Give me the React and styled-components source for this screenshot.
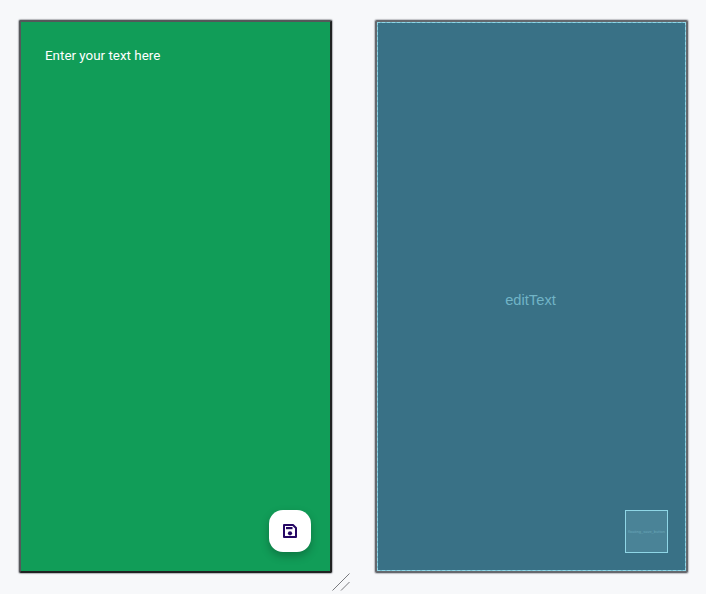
import React from "react"
import styled, { createGlobalStyle } from "styled-components"

const GlobalStyle = createGlobalStyle`
  html, body {
    margin: 0;
    padding: 0;
    height: 100%;
    background: #f7f8fa;
    overflow: hidden;
  }
`

export default function App() {
  return (
    <>
      <GlobalStyle />
      <Page>
        <DeviceColumn>
          <DesignFrame>
            <HintText>Enter your text here</HintText>
            <SaveButton>
              <SaveIcon />
            </SaveButton>
          </DesignFrame>
          <ResizeHandle />
        </DeviceColumn>
        <DeviceColumn>
          <BlueprintFrame>
            <BlueprintLabel>editText</BlueprintLabel>
            <BlueprintButton>
              <TinyLabel>floating_save_button</TinyLabel>
            </BlueprintButton>
          </BlueprintFrame>
        </DeviceColumn>
      </Page>
    </>
  )
}

function SaveIcon() {
  return (
    <svg width="14" height="14" viewBox="0 0 14 14" fill="none">
      <path
        d="M1 1H10L13 4V13H1Z"
        stroke="#260764"
        strokeWidth="2"
        strokeLinejoin="round"
      />
      <rect x="3" y="3" width="6.5" height="2.2" fill="#260764" />
      <circle cx="7" cy="9.3" r="2.1" fill="#260764" />
    </svg>
  )
}

function ResizeHandle() {
  return (
    <HandleSvg width="18" height="18" viewBox="0 0 18 18" fill="none">
      <path
        d="M0.5 17.5L17.5 0.5M9 17.5L17.5 9"
        stroke="#6a6c70"
        strokeWidth="0.9"
      />
    </HandleSvg>
  )
}

const Page = styled.div`
  display: flex;
  gap: 43px;
  width: 706px;
  height: 594px;
  box-sizing: border-box;
  padding: 20px 0 0 19px;
`

const DeviceColumn = styled.div`
  position: relative;
  width: 313px;
  height: 553px;
`

const DesignFrame = styled.div`
  position: relative;
  box-sizing: border-box;
  width: 100%;
  height: 100%;
  background: #119d58;
  border-style: solid;
  border-width: 2px;
  border-color: #55585a #1f2221 #1f2221 #55585a;
  border-radius: 2px;
  box-shadow: 0 0 1px 1px rgba(110, 112, 118, 0.5);
  padding: 25px 24px;
`

const HintText = styled.div`
  font-family: Roboto, "Liberation Sans", sans-serif;
  font-size: 13.4px;
  line-height: 17px;
  color: #ffffff;
`

const SaveButton = styled.div`
  position: absolute;
  right: 19px;
  bottom: 19px;
  width: 42px;
  height: 42px;
  display: flex;
  align-items: center;
  justify-content: center;
  background: #ffffff;
  border-radius: 14px;
  box-shadow: 0 4px 8px rgba(0, 0, 0, 0.25);
`

const HandleSvg = styled.svg`
  position: absolute;
  right: -18px;
  bottom: -18px;
`

const BlueprintFrame = styled.div`
  position: relative;
  box-sizing: border-box;
  width: 100%;
  height: 100%;
  padding: 8px 2px 0 0;
  display: flex;
  align-items: center;
  justify-content: center;
  background: #397186;
  border: 2px solid #65686d;
  border-radius: 2px;
  outline: 1px dashed #8fd6e6;
  outline-offset: -3px;
  box-shadow:
    inset 0 0 0 1px #74bacd,
    0 0 1px 1px rgba(110, 112, 118, 0.4);
`

const BlueprintLabel = styled.div`
  font-family: "Liberation Sans", Arial, sans-serif;
  font-size: 14.7px;
  line-height: 17px;
  color: #71b4c6;
`

const BlueprintButton = styled.div`
  position: absolute;
  right: 18px;
  bottom: 18px;
  box-sizing: border-box;
  width: 43px;
  height: 43px;
  display: flex;
  align-items: center;
  justify-content: center;
  background: #4a8397;
  border: 1px solid #8fd6e6;
`

const TinyLabel = styled.div`
  font-family: "Liberation Sans", Arial, sans-serif;
  font-size: 4px;
  line-height: 5px;
  white-space: nowrap;
  color: #6aa8ba;
`
